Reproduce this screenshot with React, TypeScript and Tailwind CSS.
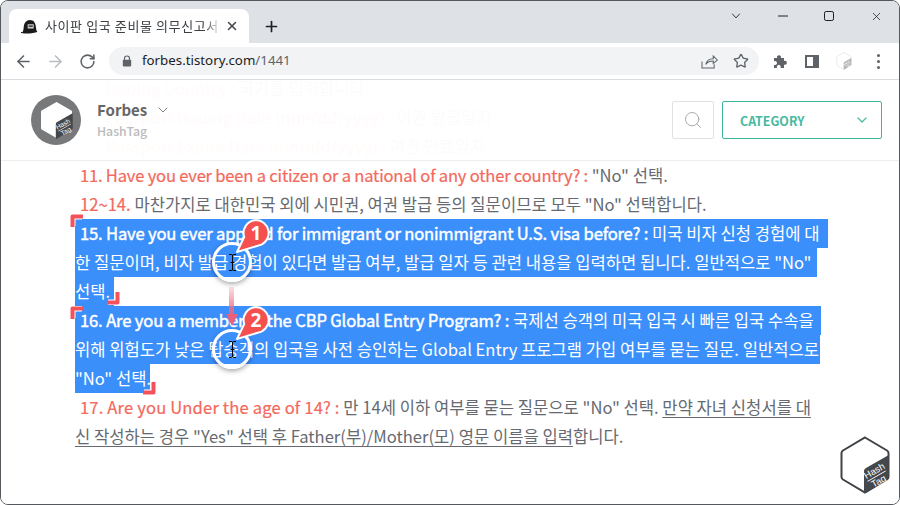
import React from "react";
import { ArrowLeft, ArrowRight, RotateCw, Star, Search, ChevronDown, X, Plus } from "lucide-react";

const Red = ({ children, className = "" }: { children: React.ReactNode; className?: string }) => <span className={`text-[#f4695c] [-webkit-text-stroke:0.2px_#f4695c] ${className}`}>{children}</span>;

const Line = ({ children, className = "" }: { children: React.ReactNode; className?: string }) => (
  <div className={`h-[29px] leading-[29px] whitespace-nowrap ${className}`}>{children}</div>
);

const Sel = ({ children, w }: { children: React.ReactNode; w: string }) => (
  <div className={`h-[29px] leading-[29px] whitespace-nowrap overflow-hidden bg-[#3b8ffb] text-white ${w}`}>{children}</div>
);

const Strong = ({ children, className = "" }: { children: React.ReactNode; className?: string }) => <span className={`[-webkit-text-stroke:0.45px_#fff] ${className}`}>{children}</span>;

const Cube = ({ className, stroke = "#3f4246" }: { className: string; stroke?: string }) => (
  <svg viewBox="0 0 50 58" className={className}>
    <path d="M25 1.5 47 14.5Q48.5 15.5 48.5 17V41Q48.5 42.5 47 43.5L25 56.5 3 43.5Q1.5 42.5 1.5 41V17Q1.5 15.5 3 14.5Z" fill="#fff" stroke={stroke} strokeWidth="2" />
    <path d="M24 55.5V35Q24 33 26 32L47 20Q48.5 19 48.5 21V41Q48.5 42.5 47 43.5L26 56Q24 57 24 55.5Z" fill="#44474b" />
    <g fill="#fff" fontFamily="'Liberation Sans',sans-serif" fontSize="9.5" transform="rotate(-30 36 40)">
      <text x="26" y="38">Hash</text>
      <rect x="26" y="40" width="21" height="0.8" />
      <text x="28" y="49">Tag</text>
    </g>
  </svg>
);

const Corner = ({ className, br = false }: { className: string; br?: boolean }) => (
  <svg viewBox="0 0 13 13" className={`absolute w-[13px] h-[13px] ${className}`}>
    <path d={br ? "M1 10.5H10.5V1" : "M12 2.5H2.5V12"} fill="none" stroke="#fff" strokeWidth="6" strokeLinejoin="round" />
    <path d={br ? "M1 10.5H10.5V1" : "M12 2.5H2.5V12"} fill="none" stroke="#f4525a" strokeWidth="4" strokeLinejoin="round" strokeLinecap="round" />
  </svg>
);

const Marker = ({ n, className }: { n: string; className: string }) => (
  <div className={`absolute w-[60px] h-[60px] ${className}`}>
    <div className="absolute left-0 top-[18px] w-[40px] h-[40px] rounded-full border-[3px] border-white shadow-[0_2px_5px_rgba(0,0,0,0.35)]" />
    <svg viewBox="0 0 9 17" className="absolute left-[16px] top-[30px] w-[9px] h-[17px]">
      <path d="M1 .5H3.5Q4.5 .5 4.5 2V15Q4.5 16.5 3.5 16.5H1M8 .5H5.5Q4.5 .5 4.5 2V15Q4.5 16.5 5.5 16.5H8M2.5 8.5H6.5" stroke="#000" strokeWidth="1" fill="none" />
    </svg>
    <svg viewBox="0 0 42 46" className="absolute left-[19px] top-[-7px] w-[42px] h-[46px] overflow-visible">
      <path d="M25 3A13 13 0 0 1 30.5 27.6L6 35 13.2 20A13 13 0 0 1 25 3Z" fill="#f5504f" stroke="#fff" strokeWidth="2" strokeLinejoin="round" />
      <text x="25" y="22.5" textAnchor="middle" fontFamily="'Noto Sans',sans-serif" fontWeight="700" fontSize="19" fill="#fff">{n}</text>
    </svg>
  </div>
);

export default function App() {
  return (
    <div className="w-[900px] h-[505px] bg-white overflow-hidden">
      <div className="h-full flex flex-col rounded-[8px] border border-[#55585c] overflow-hidden font-['Noto_Sans_CJK_KR','Noto_Sans',sans-serif]">
        {/* Tab strip */}
        <div className="h-[42px] shrink-0 bg-[#dee1e6] flex items-end pl-[8px]">
          <div className="w-[240px] h-[34px] bg-white rounded-t-[8px] flex items-center pl-[12px] pr-[10px]">
            <svg viewBox="0 0 18 16" className="w-[17px] h-[15px] shrink-0">
              <path d="M1 14.5C2 14 2.5 12 2.8 9 3.2 4 5.5 1 9.5 1 13.5 1 15.5 4 15.8 8.5L16.5 12.5C17.5 13 17.5 14 16.5 14.2 12 15.5 6 15.7 1.5 15.3.7 15.2.6 14.7 1 14.5Z" fill="#1a1a1c" />
              <path d="M7 5.5h6.5v4.5H7Z" fill="#cfcfcf" />
              <path d="M8 7h4.5v1.2H8Z" fill="#1a1a1c" />
            </svg>
            <span className="ml-[7px] w-[176px] overflow-hidden whitespace-nowrap text-[13px] tracking-[0.6px] leading-[18px] text-[#3c4043] [mask-image:linear-gradient(90deg,#000_160px,transparent)]">사이판 입국 준비물 의무신고서(ESTA)</span>
            <X size={14} strokeWidth={2.6} className="text-[#45484c] ml-auto" />
          </div>
          <div className="h-[34px] w-[44px] flex items-center justify-center">
            <Plus size={17} strokeWidth={2.4} className="text-[#202124]" />
          </div>
          <div className="flex-1 self-start h-[30px] flex items-center justify-end">
            <svg viewBox="0 0 12 8" className="w-[10px] h-[6px] mr-[37px]"><path d="M1 1l5 5.5L11 1" fill="none" stroke="#202124" strokeWidth="1.2" /></svg>
            <svg viewBox="0 0 12 12" className="w-[10px] h-[10px] mr-[36px]"><path d="M0 6h12" stroke="#202124" strokeWidth="1.2" /></svg>
            <svg viewBox="0 0 12 12" className="w-[10px] h-[10px] mr-[36px]"><rect x="0.6" y="0.6" width="10.8" height="10.8" rx="2" fill="none" stroke="#202124" strokeWidth="1.2" /></svg>
            <X size={13} strokeWidth={1.4} className="text-[#202124] mr-[16px]" />
          </div>
        </div>
        {/* Toolbar */}
        <div className="h-[37px] shrink-0 bg-white border-b border-[#dadce0] flex items-center pl-[13px] pr-[13px] relative">
          <ArrowLeft size={19} strokeWidth={2} className="text-[#5f6368]" />
          <ArrowRight size={19} strokeWidth={2} className="text-[#b9bcc0] ml-[13px]" />
          <RotateCw size={17} strokeWidth={2.2} className="text-[#5f6368] ml-[14px]" />
          <div className="ml-[13px] w-[650px] h-[28px] rounded-full bg-[#f1f3f4] flex items-center pl-[13px] pr-[10px]">
            <svg viewBox="0 0 12 14" className="w-[10px] h-[12px]"><path d="M3 6V4a3 3 0 0 1 6 0v2" fill="none" stroke="#5f6368" strokeWidth="1.4" /><rect x="1" y="5.5" width="10" height="8" rx="1" fill="#5f6368" /></svg>
            <span className="ml-[10px] font-['Noto_Sans',sans-serif] text-[13.3px] text-[#202124]">forbes.tistory.com<span className="text-[#5f6368]">/1441</span></span>
            <svg viewBox="0 0 18 16" className="ml-auto w-[17px] h-[15px]"><path d="M1 8v7h13v-4M5 11c1-4 4-6 8-6V2l4.5 4.5L13 10V7.5c-3 0-6 1-8 3.5Z" fill="none" stroke="#5f6368" strokeWidth="1.1" /></svg>
            <Star size={16} strokeWidth={2} className="text-[#5f6368] ml-[15px]" />
          </div>
          <svg viewBox="0 0 16 16" className="w-[16px] h-[16px] ml-[14px]"><path d="M1 5h3.2a2 2 0 1 1 3.6 0H11v3a2 2 0 1 1 0 3.6V15H7.5a2 2 0 1 0-3.4 0H1v-3.3a2 2 0 1 0 0-3.4Z" fill="#5f6368" /></svg>
          <div className="w-[14px] h-[13px] ml-[16px] border-[2px] border-[#5f6368] border-r-[6px]" />
          <Cube className="w-[16px] h-[18px] ml-[17px] opacity-40" stroke="#b0b3b6" />
          <div className="ml-[25px] flex flex-col gap-[3px]">
            <div className="w-[3px] h-[3px] rounded-full bg-[#5f6368]" />
            <div className="w-[3px] h-[3px] rounded-full bg-[#5f6368]" />
            <div className="w-[3px] h-[3px] rounded-full bg-[#5f6368]" />
          </div>
        </div>
        {/* Page */}
        <div className="flex-1 relative overflow-hidden bg-white">
          <article className="relative mt-[-6px] pl-[74px] text-[16.6px] text-[#666a70]">
            <Line className="pl-[31px]"><Red>Issuing Country</Red> : 국가를 입력합니다.</Line>
            <Line className="pl-[31px]"><Red>Passport Issuing Date (mm/dd/yyyy)</Red> : 여권 발급일자</Line>
            <Line className="pl-[31px]"><Red>Passport Expire Date (mm/dd/yyyy)</Red> : 여권 만료일자</Line>
            <Line className="pl-[5px]"><Red className="tracking-[-0.22px]">11. Have you ever been a citizen or a national of any other country? :</Red> "No" 선택.</Line>
            <Line className="pl-[5px]"><Red>12~14.</Red> 마찬가지로 대한민국 외에 시민권, 여권 발급 등의 질문이므로 모두 "No" 선택합니다.</Line>
            <Sel w="w-[753px] pl-[5px]"><Strong className="tracking-[-0.18px]">15. Have you ever applied for immigrant or nonimmigrant U.S. visa before? :</Strong> 미국 비자 신청 경험에 대</Sel>
            <Sel w="w-[742px]">한 질문이며, 비자 발급 경험이 있다면 발급 여부, 발급 일자 등 관련 내용을 입력하면 됩니다. 일반적으로 "No"</Sel>
            <Sel w="w-[39px]">선택.</Sel>
            <Sel w="w-[746px] pl-[5px]"><Strong className="tracking-[-0.15px]">16. Are you a member of the CBP Global Entry Program? :</Strong> 국제선 승객의 미국 입국 시 빠른 입국 수속을</Sel>
            <Sel w="w-[745px]">위해 위험도가 낮은 탑승객의 입국을 사전 승인하는 Global Entry 프로그램 가입 여부를 묻는 질문. 일반적으로</Sel>
            <Sel w="w-[75px]">"No" 선택.</Sel>
            <Line className="pl-[5px]"><Red className="tracking-[0.15px]">17. Are you Under the age of 14? :</Red> 만 14세 이하 여부를 묻는 질문으로 "No" 선택. <span className="underline underline-offset-[3px]">만약 자녀 신청서를 대</span></Line>
            <Line><span className="underline underline-offset-[3px]">신 작성하는 경우 "Yes" 선택 후 Father(부)/Mother(모) 영문 이름을 입력</span>합니다.</Line>
          </article>

          {/* Annotations */}
          <Corner className="left-[69px] top-[134px]" />
          <Corner br className="left-[106px] top-[212px]" />
          <Corner className="left-[69px] top-[226px]" />
          <Corner br className="left-[142px] top-[302px]" />
          <div className="absolute left-[228px] top-[207px] w-[5px] h-[30px] bg-gradient-to-b from-[#f4b5c0]/40 to-[#e8607c]" />
          <svg viewBox="0 0 12 12" className="absolute left-[224.5px] top-[234px] w-[12px] h-[12px]"><path d="M0 0H12L6 12Z" fill="#e8607c" /></svg>
          <Marker n="1" className="left-[211px] top-[144px]" />
          <Marker n="2" className="left-[211px] top-[231px]" />

          {/* Sticky header */}
          <header className="absolute left-0 right-0 top-0 h-[81px] bg-white/[.975] border-b border-[#eeeeee] flex items-center pl-[30px] pr-[17px]">
            <div className="w-[50px] h-[50px] rounded-full bg-[#77797b] flex items-center justify-center">
              <Cube className="w-[35px] h-[40px]" stroke="#77797b" />
            </div>
            <div className="ml-[16px]">
              <div className="flex items-center gap-[8px] h-[22px] mt-[-1px]">
                <span className="text-[15px] font-bold text-[#666666]">Forbes</span>
                <ChevronDown size={16} strokeWidth={1.4} className="text-[#777]" />
              </div>
              <div className="text-[12.3px] leading-[18px] font-medium text-[#bbbbbb] mt-[1px]">HashTag</div>
            </div>
            <div className="ml-auto w-[42px] h-[38px] border border-[#e2e2e2] rounded-[2px] flex items-center justify-center">
              <Search size={20} strokeWidth={1.2} className="text-[#aaaaaa]" />
            </div>
            <div className="ml-[8px] w-[160px] h-[38px] border border-[#3db79c] rounded-[2px] flex items-center justify-between pl-[17px] pr-[11px]">
              <span className="text-[12.4px] font-bold text-[#47b9a0] mt-[2px]">CATEGORY</span>
              <ChevronDown size={16} strokeWidth={1.8} className="text-[#47b9a0]" />
            </div>
          </header>

          {/* Bottom-right badge */}
          <Cube className="absolute left-[839px] top-[356px] w-[50px] h-[58px]" />
        </div>
      </div>
    </div>
  );
}
